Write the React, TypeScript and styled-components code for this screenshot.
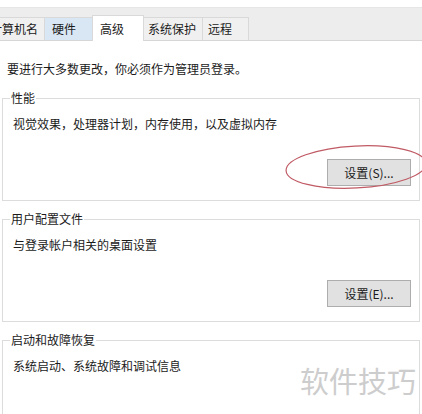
import React from "react";
import styled, { createGlobalStyle } from "styled-components";

const Global = createGlobalStyle`
  html, body { margin: 0; padding: 0; background: #ffffff; }
  body {
    width: 422px;
    height: 414px;
    overflow: hidden;
    font-family: "Noto Sans CJK SC", "Noto Sans", sans-serif;
    font-size: 12px;
    color: #1b1b1b;
  }
`;

const Page = styled.div`
  position: relative;
  width: 422px;
  height: 414px;
  overflow: hidden;
  background: #ffffff;
  padding-top: 7px;
  box-sizing: border-box;
`;

const TabStrip = styled.div`
  display: flex;
  align-items: flex-end;
  height: 32px;
  background: #ededed;
  border-top: 1px solid #e6e6e6;
  border-bottom: 1px solid #d6d6d6;
  box-sizing: content-box;
`;

const Tab = styled.div<{ $w: number; $pad: number; $active?: boolean; $hover?: boolean; $offset?: number }>`
  box-sizing: border-box;
  width: ${(p) => p.$w}px;
  margin-left: ${(p) => p.$offset ?? 0}px;
  margin-right: -1px;
  height: ${(p) => (p.$active ? 26 : 23)}px;
  margin-bottom: ${(p) => (p.$active ? -1 : 0)}px;
  padding-left: ${(p) => p.$pad}px;
  display: flex;
  align-items: center;
  white-space: nowrap;
  line-height: 16px;
  border: 1px solid #d9d9d9;
  border-bottom: none;
  background: ${(p) => (p.$active ? "#ffffff" : p.$hover ? "#d9e7f4" : "#f0f0f0")};
  position: relative;
  z-index: ${(p) => (p.$active ? 1 : 0)};
`;

const Content = styled.div`
  display: flex;
  flex-direction: column;
`;

const Intro = styled.div`
  margin: 20px 0 13px 7px;
  line-height: 16px;
`;

const Groups = styled.div`
  display: flex;
  flex-direction: column;
  gap: 10px;
`;

const Group = styled.fieldset<{ $open?: boolean }>`
  margin: 0 2px;
  padding: 10px 8px ${(p) => (p.$open ? 60 : 14)}px 10px;
  border: 1px solid #dcdcdc;
  min-width: 0;
`;

const Legend = styled.legend`
  padding: 0 1px;
  margin-left: -3px;
  line-height: 16px;
  font-size: 12px;
  color: #1b1b1b;
`;

const Desc = styled.div`
  line-height: 16px;
`;

const ButtonRow = styled.div`
  display: flex;
  justify-content: flex-end;
  margin-top: 27px;
`;

const Button = styled.button`
  width: 84px;
  height: 27px;
  padding: 0;
  background: #e1e1e1;
  border: 1px solid #adadad;
  font-family: "Noto Sans CJK SC", "Noto Sans", sans-serif;
  font-size: 12px;
  color: #1b1b1b;
`;

const Watermark = styled.div`
  position: absolute;
  left: 300px;
  top: 366px;
  font-size: 29px;
  line-height: 1;
  color: #cdcdcd;
  font-family: "Noto Sans CJK SC", sans-serif;
  pointer-events: none;
`;

const Markup = styled.svg`
  position: absolute;
  left: 0;
  top: 0;
  pointer-events: none;
`;

export default function App() {
  return (
    <>
      <Global />
      <Page>
        <TabStrip>
          <Tab $w={61} $pad={5} $offset={-16}>计算机名</Tab>
          <Tab $w={49} $pad={7} $hover>硬件</Tab>
          <Tab $w={52} $pad={7} $active>高级</Tab>
          <Tab $w={60} $pad={4}>系统保护</Tab>
          <Tab $w={47} $pad={5}>远程</Tab>
        </TabStrip>
        <Content>
          <Intro>要进行大多数更改，你必须作为管理员登录。</Intro>
          <Groups>
            <Group>
              <Legend>性能</Legend>
              <Desc>视觉效果，处理器计划，内存使用，以及虚拟内存</Desc>
              <ButtonRow>
                <Button>设置(S)...</Button>
              </ButtonRow>
            </Group>
            <Group>
              <Legend>用户配置文件</Legend>
              <Desc>与登录帐户相关的桌面设置</Desc>
              <ButtonRow>
                <Button>设置(E)...</Button>
              </ButtonRow>
            </Group>
            <Group $open>
              <Legend>启动和故障恢复</Legend>
              <Desc>系统启动、系统故障和调试信息</Desc>
            </Group>
          </Groups>
        </Content>
        <Watermark>软件技巧</Watermark>
        <Markup width={422} height={414} viewBox="0 0 422 414">
          <ellipse
            cx={356}
            cy={167}
            rx={70}
            ry={21}
            transform="rotate(-3 356 167)"
            fill="none"
            stroke="#c05a64"
            strokeWidth={1.2}
          />
        </Markup>
      </Page>
    </>
  );
}
